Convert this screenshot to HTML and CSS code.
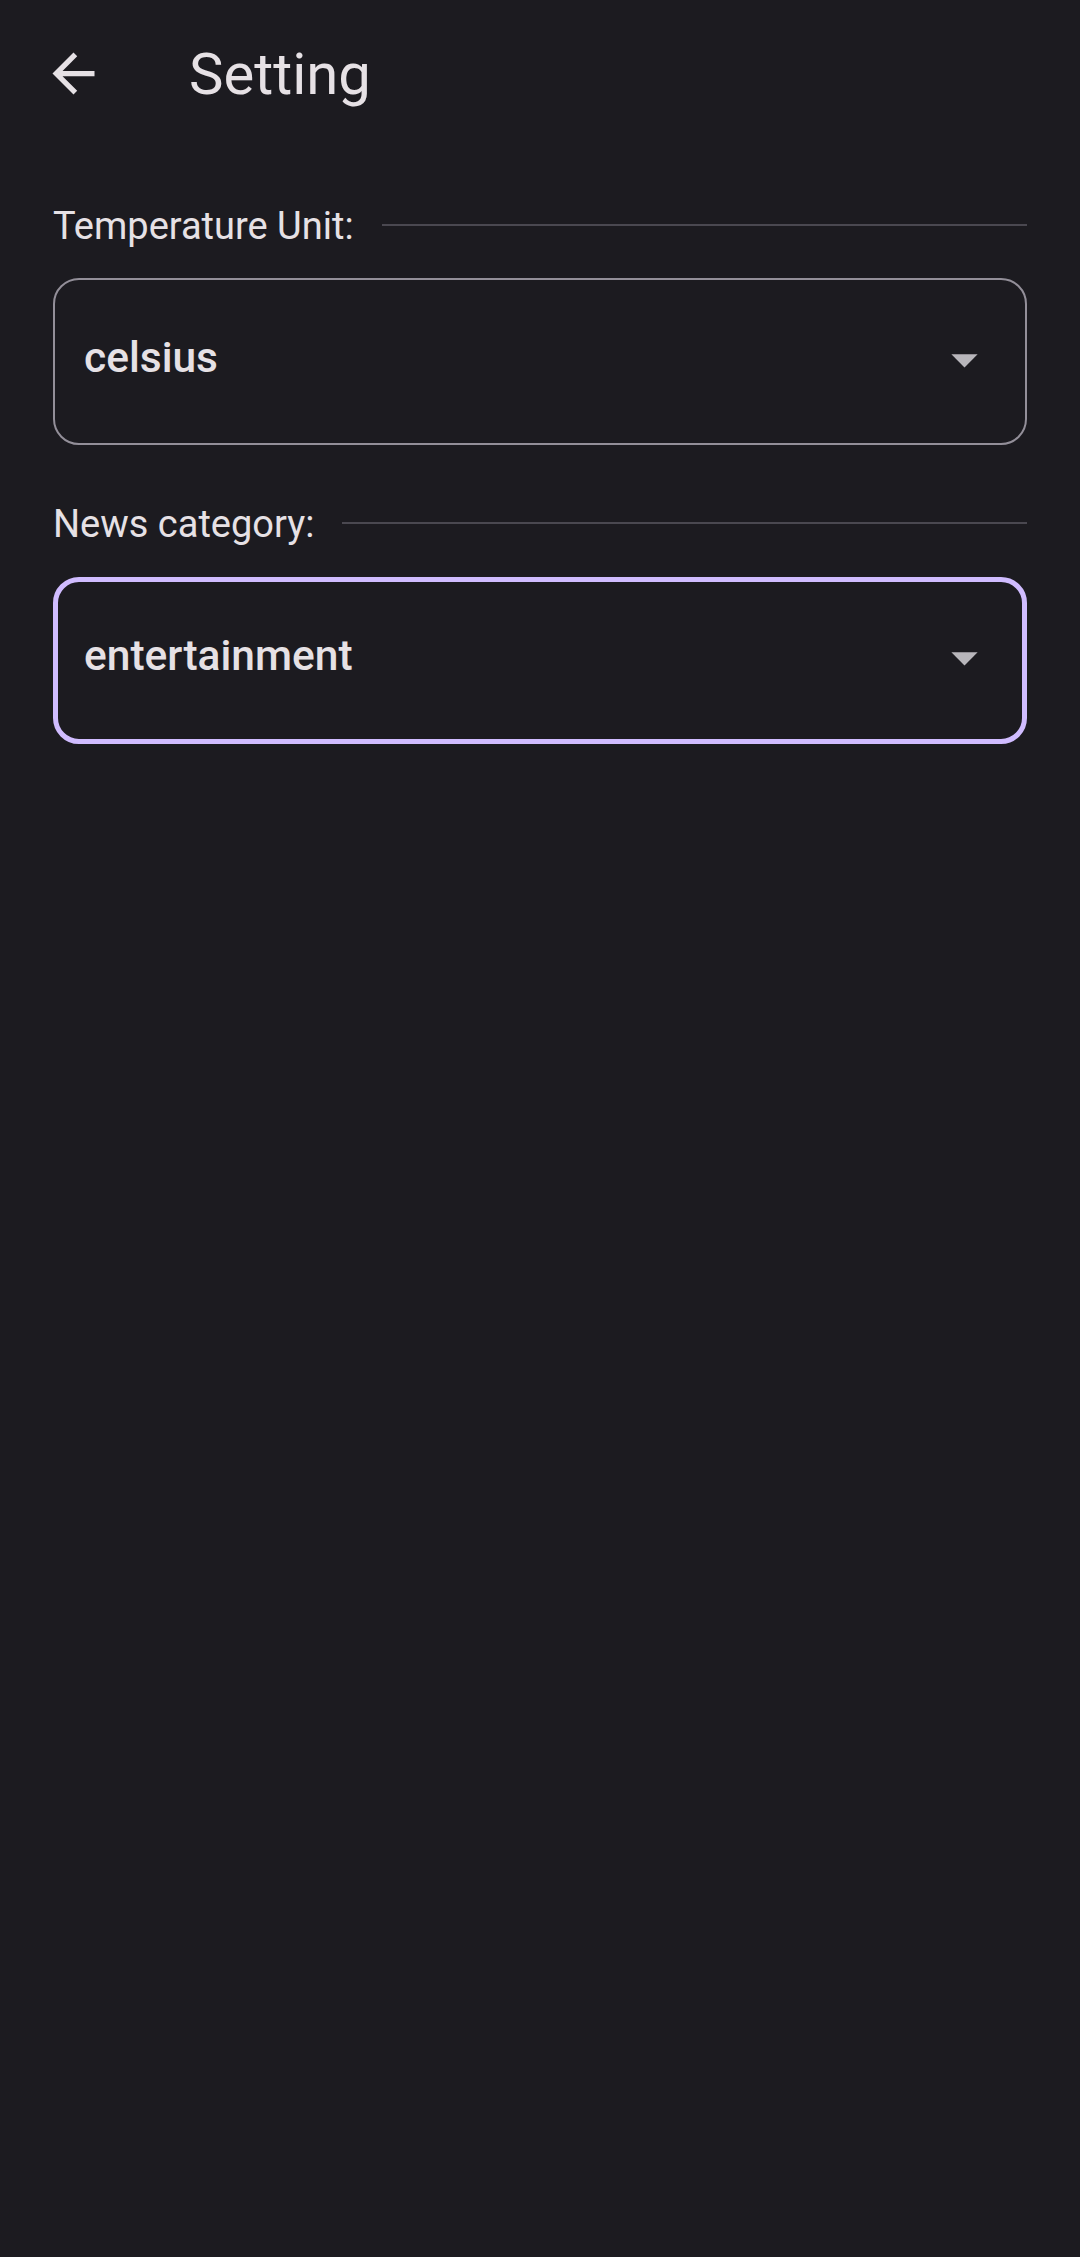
FILE: index.html
```html
<!DOCTYPE html>
<html lang="en">
<head>
<meta charset="utf-8">
<title>Setting</title>
<link rel="stylesheet" href="styles.css">
</head>
<body>
<div class="screen">
  <header class="appbar">
    <button class="back" aria-label="Back">
      <svg viewBox="0 0 24 24" width="63" height="63"><path d="M20 11H7.83l5.59-5.59L12 4l-8 8 8 8 1.41-1.41L7.83 13H20v-2z" fill="#e6e1e5"/></svg>
    </button>
    <h1 class="title">Setting</h1>
  </header>
  <main class="content">
    <div class="label-row">
      <span class="label">Temperature Unit:</span>
      <span class="rule"></span>
    </div>
    <div class="select">
      <span class="value">celsius</span>
      <svg class="caret" viewBox="0 0 24 24" width="63" height="63"><path d="M7 10l5 5 5-5z" fill="#b8b6bb"/></svg>
    </div>
    <div class="label-row second">
      <span class="label">News category:</span>
      <span class="rule"></span>
    </div>
    <div class="select focused">
      <span class="value">entertainment</span>
      <svg class="caret" viewBox="0 0 24 24" width="63" height="63"><path d="M7 10l5 5 5-5z" fill="#b8b6bb"/></svg>
    </div>
  </main>
</div>
</body>
</html>
```
FILE: styles.css
```css
html, body {
  margin: 0;
  padding: 0;
  background: #1c1b20;
}
.screen {
  width: 1080px;
  height: 2257px;
  background: #1c1b20;
  color: #e6e1e5;
  font-family: Roboto, "Noto Sans", sans-serif;
  overflow: hidden;
}
.appbar {
  height: 147px;
  display: flex;
  align-items: center;
}
.back {
  width: 63px;
  height: 63px;
  margin-left: 42px;
  padding: 0;
  border: 0;
  background: none;
  display: flex;
}
.title {
  margin: 0 0 0 84px;
  font-size: 58px;
  font-weight: 400;
  line-height: 68px;
  color: #e6e1e5;
}
.content {
  padding: 56px 53px 0 53px;
  display: flex;
  flex-direction: column;
}
.label-row {
  height: 46px;
  display: flex;
  align-items: center;
  gap: 28px;
}
.label-row.second {
  margin-top: 56px;
}
.label {
  font-size: 38px;
  line-height: 46px;
  white-space: nowrap;
}
.rule {
  flex: 1;
  height: 2px;
  margin-bottom: 3px;
  background: #4a4850;
}
.select {
  margin-top: 29px;
  height: 167px;
  box-sizing: border-box;
  border: 2px solid #938f99;
  border-radius: 26px;
  display: flex;
  align-items: flex-start;
  padding: 53px 29px 0 29px;
}
.select.focused {
  margin-top: 30px;
  border: 5px solid #d0bcff;
  padding: 49px 26px 0 26px;
}
.value {
  flex: 1;
  font-size: 42.5px;
  font-weight: 500;
  line-height: 50px;
}
.caret {
  margin-top: -5.5px;
}
```
